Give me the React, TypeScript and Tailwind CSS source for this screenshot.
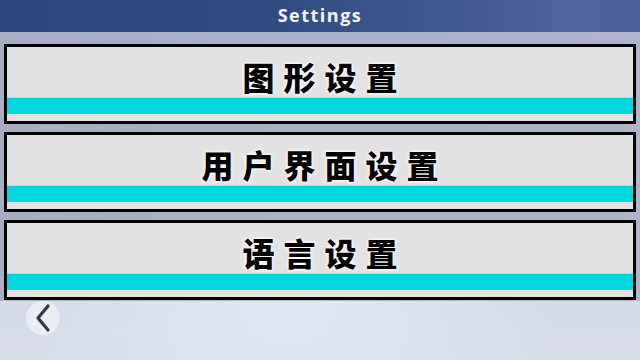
import React from "react";

const items = ["图形设置", "用户界面设置", "语言设置"];

export default function App() {
  return (
    <div className="relative w-[640px] h-[360px] overflow-hidden bg-[linear-gradient(180deg,#c3cde0_0%,#ccd5e7_55%,#d8dde8_100%)]">
      <div className="absolute inset-0 bg-[radial-gradient(ellipse_at_45%_80%,rgba(230,236,248,0.8)_0%,rgba(230,236,248,0)_55%)]" />
      <div className="relative flex flex-col">
        <div className="h-[32px] flex items-center justify-center bg-[linear-gradient(90deg,#2b487d_0%,#2e4b80_40%,#3f5a90_70%,#4e669b_90%,#4a6298_100%)]">
          <span
            className="text-[#f4f4f4] text-[18px] font-bold tracking-[1.5px] leading-none pb-[3px]"
            style={{ fontFamily: '"Open Sans", "DejaVu Sans", sans-serif' }}
          >
            Settings
          </span>
        </div>
        <div className="flex flex-col gap-[8px] pt-[12px] px-[4px] pb-[1px] bg-[linear-gradient(90deg,#a8afc5_0%,#aab2c8_50%,#afb6cb_100%)]">
          {items.map((t) => (
            <div
              key={t}
              className="h-[80px] border-[3px] border-black bg-[#e2e2e2] flex flex-col"
            >
              <div className="h-[50px] pt-[8px] flex items-center justify-center">
                <span
                  className="text-black text-[32px] font-black leading-none tracking-[9px] mr-[-9px] [text-shadow:0_0_2px_#fff,0_0_3px_#fff,0_0_4px_#fff]"
                  style={{
                    fontFamily:
                      '"Noto Sans CJK SC", "Noto Sans CJK JP", sans-serif',
                  }}
                >
                  {t}
                </span>
              </div>
              <div className="h-[17px] bg-[#00d8e1] border-t border-[#8fe6ea]" />
              <div className="h-[7px] bg-[#e2e2e2]" />
            </div>
          ))}
        </div>
        <div className="pl-[26px] pt-[0px]">
          <div className="w-[34px] h-[34px] rounded-full bg-[#eaedf3] flex items-center justify-center">
            <svg width="20" height="30" viewBox="0 0 20 30">
              <path
                d="M15 3 L5 15 L15 27"
                fill="none"
                stroke="#2e3849"
                strokeWidth="3.2"
                strokeLinecap="round"
                strokeLinejoin="round"
              />
            </svg>
          </div>
        </div>
      </div>
    </div>
  );
}
